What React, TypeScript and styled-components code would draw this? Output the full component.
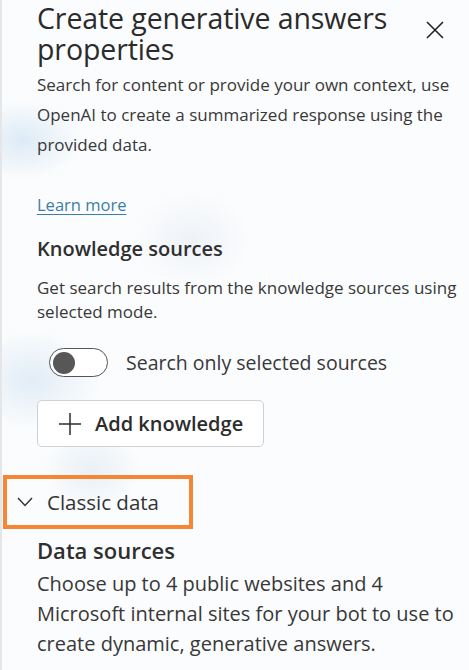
import React from 'react';
import styled, { createGlobalStyle } from 'styled-components';

const GlobalStyle = createGlobalStyle`
  html, body {
    margin: 0;
    padding: 0;
  }
  body {
    font-family: 'Open Sans', 'Noto Sans', sans-serif;
    color: #333;
    background: #fbfcfd;
  }
`;

const Panel = styled.div`
  width: 469px;
  height: 670px;
  box-sizing: border-box;
  overflow: hidden;
  border-left: 2px solid #e4e6e8;
  background:
    radial-gradient(ellipse 60px 40px at 20px 140px, rgba(196, 220, 240, 0.55), transparent),
    radial-gradient(ellipse 70px 50px at 30px 380px, rgba(200, 222, 240, 0.5), transparent),
    radial-gradient(ellipse 50px 40px at 90px 470px, rgba(210, 225, 238, 0.45), transparent),
    radial-gradient(ellipse 60px 50px at 190px 240px, rgba(225, 232, 242, 0.5), transparent),
    #fbfcfd;
  padding: 0 8px 0 35px;
`;

const Header = styled.div`
  display: flex;
  align-items: flex-start;
  justify-content: space-between;
`;

const Title = styled.h1`
  margin: 3px 0 0;
  font-size: 28.5px;
  line-height: 31px;
  font-weight: 400;
  color: #2b2b2b;
  letter-spacing: -0.1px;
`;

const CloseButton = styled.button`
  border: none;
  background: transparent;
  padding: 0;
  margin: 21px 17px 0 0;
  width: 18px;
  height: 18px;
  flex-shrink: 0;
  display: flex;
  cursor: pointer;
`;

const Paragraph = styled.p<{ $size: number; $line: number }>`
  margin: 0;
  font-size: ${p => p.$size}px;
  line-height: ${p => p.$line}px;
  color: #383838;
`;

const Link = styled.a`
  display: inline-block;
  font-size: 16.5px;
  color: #3d7ea6;
  text-decoration: underline;
  text-underline-offset: 3px;
  text-decoration-thickness: 1px;
  margin-top: 33px;
`;

const SectionTitle = styled.h2<{ $size: number }>`
  margin: 0;
  font-size: ${p => p.$size}px;
  font-weight: 600;
  color: #2f2f2f;
`;

const ToggleRow = styled.label`
  display: flex;
  align-items: center;
  gap: 18px;
  margin: 24px 0 0 12px;
  font-size: 19.5px;
  color: #383838;
`;

const Switch = styled.span`
  width: 59px;
  height: 29px;
  box-sizing: border-box;
  border: 1px solid #555;
  border-radius: 15px;
  display: flex;
  align-items: center;
  padding-left: 3px;
  background: #fff;
`;

const Knob = styled.span`
  width: 22px;
  height: 22px;
  border-radius: 50%;
  background: #575757;
`;

const AddButton = styled.button`
  margin-top: 23px;
  width: 227px;
  height: 47px;
  box-sizing: border-box;
  border: 1px solid #cfd1d3;
  border-radius: 5px;
  background: #fff;
  display: flex;
  align-items: center;
  gap: 14px;
  padding: 0 0 0 21px;
  font-family: inherit;
  font-size: 20px;
  font-weight: 600;
  color: #2c2c2c;
  cursor: pointer;
`;

const AccordionHeader = styled.div`
  margin: 28px 0 0 -34px;
  width: 190px;
  height: 54px;
  box-sizing: border-box;
  border: 4px solid #f58634;
  display: flex;
  align-items: center;
  gap: 14px;
  padding-left: 10px;
  font-size: 20.5px;
  font-weight: 500;
  color: #333;
`;

const AccordionBody = styled.div`
  margin-top: 6px;
`;

const App: React.FC = () => (
  <>
    <GlobalStyle />
    <Panel>
      <Header>
        <Title>Create generative answers properties</Title>
        <CloseButton aria-label="Close">
          <svg width="18" height="18" viewBox="0 0 18 18">
            <path d="M1 1 L17 17 M17 1 L1 17" stroke="#222" strokeWidth="1.6" />
          </svg>
        </CloseButton>
      </Header>
      <Paragraph $size={17} $line={30} style={{ marginTop: 5 }}>
        Search for content or provide your own context, use OpenAI to create a summarized response using the
        provided data.
      </Paragraph>
      <Link href="#">Learn more</Link>
      <SectionTitle $size={20} style={{ marginTop: 19 }}>Knowledge sources</SectionTitle>
      <Paragraph $size={17} $line={24} style={{ marginTop: 14 }}>
        Get search results from the knowledge sources using selected mode.
      </Paragraph>
      <ToggleRow>
        <Switch>
          <Knob />
        </Switch>
        Search only selected sources
      </ToggleRow>
      <AddButton>
        <svg width="22" height="22" viewBox="0 0 22 22">
          <path d="M11 0 V22 M0 11 H22" stroke="#2c2c2c" strokeWidth="1.5" />
        </svg>
        Add knowledge
      </AddButton>
      <AccordionHeader>
        <svg width="16" height="10" viewBox="0 0 16 10">
          <path d="M1 1 L8 8.5 L15 1" fill="none" stroke="#333" strokeWidth="1.5" />
        </svg>
        Classic data
      </AccordionHeader>
      <AccordionBody>
        <SectionTitle $size={22}>Data sources</SectionTitle>
        <Paragraph $size={20} $line={30} style={{ marginTop: 4 }}>
          Choose up to 4 public websites and 4 Microsoft internal sites for your bot to use to create dynamic,
          generative answers.
        </Paragraph>
      </AccordionBody>
    </Panel>
  </>
);

export default App;
